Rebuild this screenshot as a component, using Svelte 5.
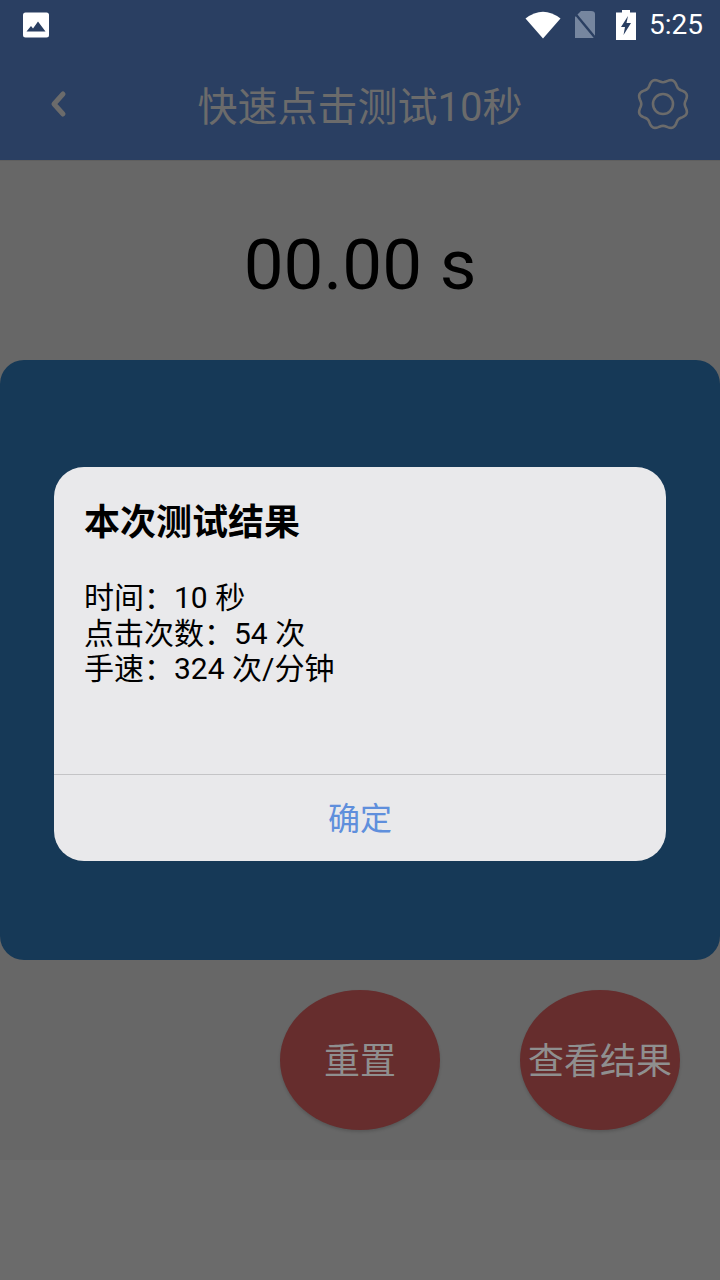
<script>
  const lines = ['时间：10 秒', '点击次数：54 次', '手速：324 次/分钟'];

  // wavy outline of the settings gear, eight soft lobes with a dip at the top
  const gear = Array.from({ length: 96 }, (_, i) => {
    const a = (i / 96) * Math.PI * 2;
    const r = 23.6 - 1.9 * Math.cos(8 * a);
    const x = 27 + r * Math.sin(a);
    const y = 27 - r * Math.cos(a);
    return `${x.toFixed(2)},${y.toFixed(2)}`;
  }).join(' ');
</script>

<div class="page">
  <header class="top">
    <div class="status">
      <svg class="pic" width="28" height="26" viewBox="0 0 28 26">
        <rect x="1" y="0.5" width="26" height="25" rx="2.5" fill="#fff" />
        <path d="M4.500 19.500 L9 14 L11 16.500 L16 9.500 L23.500 19.500 Z" fill="#2a3f62" />
      </svg>
      <div class="status-right">
        <svg width="36" height="30" viewBox="0 0 36 30">
          <path d="M18 28.500 L0.500 8.500 Q18 -5 35.500 8.500 Z" fill="#fff" />
        </svg>
        <svg class="sim" width="26" height="30" viewBox="0 0 26 30">
          <path d="M9 1 H19 Q23 1 23 4 V28 H3 V7 Z" fill="#76869f" />
          <path d="M1 1 L25 30" stroke="#2a3f62" stroke-width="2.400" />
        </svg>
        <svg class="batt" width="20" height="30" viewBox="0 0 20 30">
          <path d="M6 0 H14 V2.500 H20 V30 H0 V2.500 H6 Z" fill="#fff" />
          <path d="M12 6 L5 17 H9 L7.500 25 L15 13 H10.500 Z" fill="#2a3f62" />
        </svg>
        <span class="time">5:25</span>
      </div>
    </div>
    <div class="nav">
      <svg width="24" height="30" viewBox="0 0 24 30">
        <path d="M16 5 L7 15 L16 25" fill="none" stroke="#6b6b6b" stroke-width="5" stroke-linecap="round" stroke-linejoin="round" />
      </svg>
      <h1>快速点击测试10秒</h1>
      <svg class="gear" width="54" height="54" viewBox="0 0 54 54">
        <polygon points={gear} fill="none" stroke="#6b6b6b" stroke-width="2.600" />
        <circle cx="27" cy="27" r="10" fill="none" stroke="#6b6b6b" stroke-width="2.600" />
      </svg>
    </div>
  </header>

  <main class="body">
    <div class="timer">00.00 s</div>

    <section class="panel">
      <div class="dialog">
        <div class="content">
          <h2>本次测试结果</h2>
          <div class="lines">
            {#each lines as line}
              <div>{line}</div>
            {/each}
          </div>
        </div>
        <div class="ok">确定</div>
      </div>
    </section>

    <div class="actions">
      <div class="round">重置</div>
      <div class="round">查看结果</div>
    </div>
  </main>
</div>

<style>
  :global(body) {
    background: #6b6b6b;
  }
  .page {
    width: 720px;
    height: 1280px;
    overflow: hidden;
    font-family: Roboto, "Noto Sans CJK SC", sans-serif;
    display: flex;
    flex-direction: column;
  }
  .top {
    height: 161px;
    background: #2a3f62;
    flex: none;
    border-bottom: 1px solid #5f5f5f;
    box-sizing: border-box;
  }
  .status {
    height: 50px;
    display: flex;
    align-items: center;
    justify-content: space-between;
    padding: 0 16px 0 22px;
  }
  .status-right {
    display: flex;
    align-items: center;
  }
  .sim {
    margin-left: 11px;
  }
  .batt {
    margin-left: 18px;
  }
  .time {
    margin-left: 13px;
    color: #fff;
    font-size: 28px;
    line-height: 30px;
    width: 55px;
  }
  .nav {
    height: 108px;
    display: grid;
    grid-template-columns: 1fr auto 1fr;
    align-items: center;
    padding: 0 30px 0 47px;
  }
  .gear {
    justify-self: end;
  }
  h1 {
    margin: 0;
    font-size: 40px;
    font-weight: 400;
    color: #6b6b6b;
    white-space: nowrap;
    position: relative;
    left: -8.500px;
  }
  .body {
    height: 999px;
    background: #676767;
  }
  .timer {
    height: 199px;
    display: flex;
    align-items: center;
    justify-content: center;
    padding-top: 7px;
    box-sizing: border-box;
    font-size: 71px;
    color: #000;
  }
  .panel {
    height: 600px;
    background: #163957;
    border-radius: 24px;
    display: flex;
    justify-content: center;
    align-items: flex-start;
    padding-top: 107px;
    box-sizing: border-box;
  }
  .dialog {
    width: 612px;
    height: 394px;
    background: #e9e9eb;
    border-radius: 30px;
    display: flex;
    flex-direction: column;
  }
  .content {
    flex: 1;
    padding: 33px 31px 0 30px;
    color: #000;
  }
  h2 {
    margin: 0;
    font-size: 36px;
    line-height: 46px;
    font-weight: 700;
  }
  .lines {
    margin-top: 34px;
    font-size: 30px;
    line-height: 35.500px;
  }
  .ok {
    height: 87px;
    padding-bottom: 4px;
    box-sizing: border-box;
    border-top: 1px solid #c4c4c6;
    display: flex;
    align-items: center;
    justify-content: center;
    font-size: 32px;
    color: #5f8fdc;
  }
  .actions {
    height: 200px;
    display: flex;
    justify-content: flex-end;
    gap: 80px;
    padding: 30px 40px 0 0;
    box-sizing: border-box;
  }
  .round {
    width: 160px;
    height: 140px;
    padding-bottom: 4px;
    box-sizing: border-box;
    border-radius: 50%;
    background: #662d2d;
    color: #8f8f8f;
    font-size: 36px;
    display: flex;
    align-items: center;
    justify-content: center;
    white-space: nowrap;
    box-shadow: 0 2px 3px rgba(0, 0, 0, 0.15);
  }
</style>
